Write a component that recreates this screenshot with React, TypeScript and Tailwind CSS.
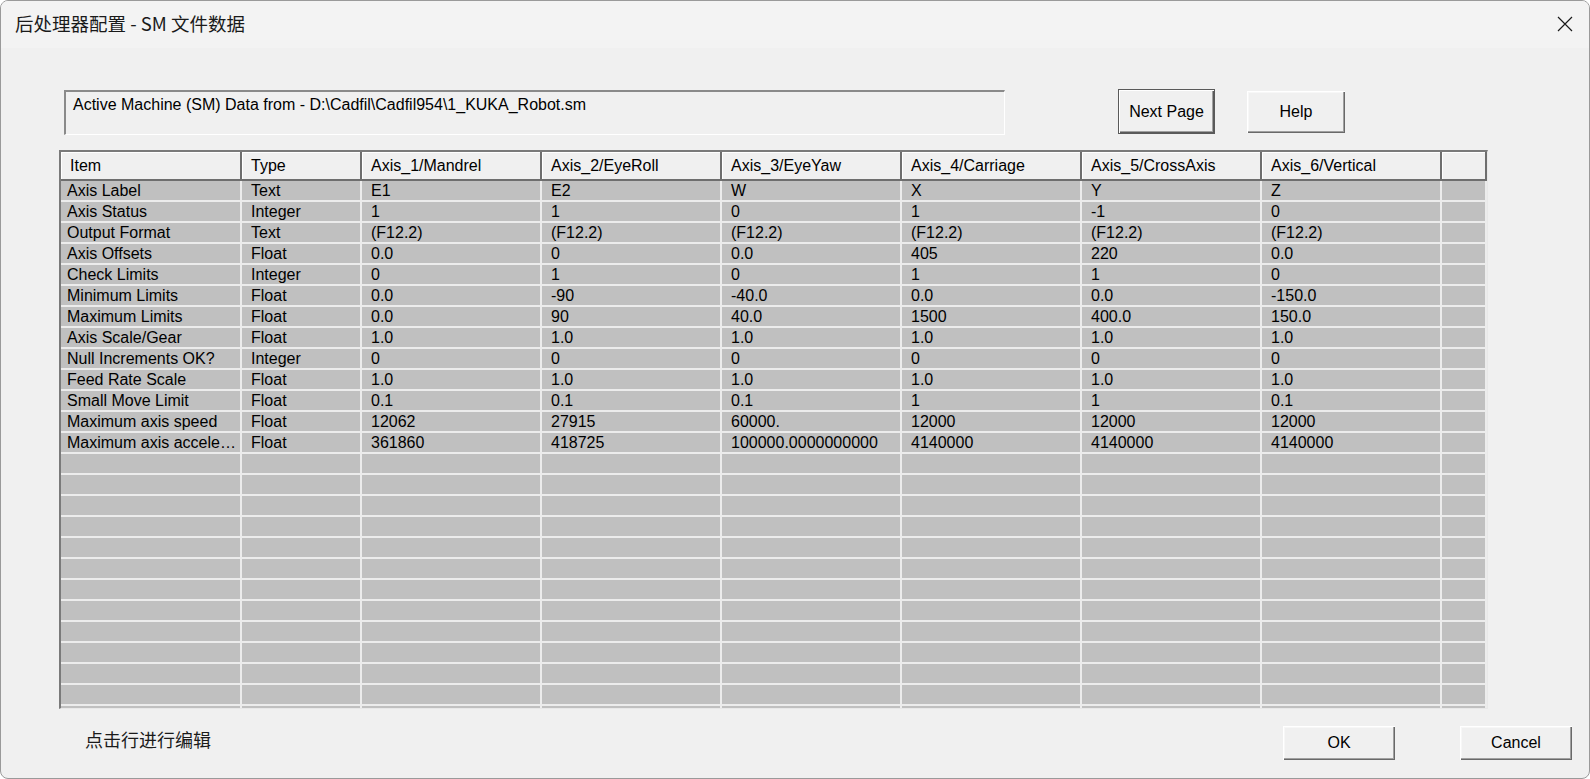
import React from 'react';

const columns = [
  'Item',
  'Type',
  'Axis_1/Mandrel',
  'Axis_2/EyeRoll',
  'Axis_3/EyeYaw',
  'Axis_4/Carriage',
  'Axis_5/CrossAxis',
  'Axis_6/Vertical',
  '',
];

const rows: string[][] = [
  ['Axis Label', 'Text', 'E1', 'E2', 'W', 'X', 'Y', 'Z'],
  ['Axis Status', 'Integer', '1', '1', '0', '1', '-1', '0'],
  ['Output Format', 'Text', '(F12.2)', '(F12.2)', '(F12.2)', '(F12.2)', '(F12.2)', '(F12.2)'],
  ['Axis Offsets', 'Float', '0.0', '0', '0.0', '405', '220', '0.0'],
  ['Check Limits', 'Integer', '0', '1', '0', '1', '1', '0'],
  ['Minimum Limits', 'Float', '0.0', '-90', '-40.0', '0.0', '0.0', '-150.0'],
  ['Maximum Limits', 'Float', '0.0', '90', '40.0', '1500', '400.0', '150.0'],
  ['Axis Scale/Gear', 'Float', '1.0', '1.0', '1.0', '1.0', '1.0', '1.0'],
  ['Null Increments OK?', 'Integer', '0', '0', '0', '0', '0', '0'],
  ['Feed Rate Scale', 'Float', '1.0', '1.0', '1.0', '1.0', '1.0', '1.0'],
  ['Small Move Limit', 'Float', '0.1', '0.1', '0.1', '1', '1', '0.1'],
  ['Maximum axis speed', 'Float', '12062', '27915', '60000.', '12000', '12000', '12000'],
  ['Maximum axis accele…', 'Float', '361860', '418725', '100000.0000000000', '4140000', '4140000', '4140000'],
];

// pad out with empty rows so the grid fills its box
while (rows.length < 26) rows.push(['', '', '', '', '', '', '', '']);

const gridCols = 'grid grid-cols-[181px_120px_180px_180px_180px_180px_180px_180px_1fr]';

function WinButton({ label, isDefault, className }: { label: string; isDefault?: boolean; className: string }) {
  return (
    <button
      className={
        'flex items-center justify-center bg-[#f0f0f0] text-[16px] text-black ' +
        (isDefault
          ? 'border border-[#5a5a5a] shadow-[inset_1px_1px_#ffffff,inset_-1px_-1px_#5a5a5a,inset_-2px_-2px_#a0a0a0] '
          : 'shadow-[inset_1px_1px_#ffffff,inset_-1px_-1px_#696969,inset_-2px_-2px_#a0a0a0,inset_2px_2px_#f7f7f7] ') +
        className
      }
    >
      {label}
    </button>
  );
}

export default function App() {
  return (
    <div className="w-[1590px] h-[779px] bg-white">
      <div
        className="w-full h-full flex flex-col rounded-[8px] border border-[#9a9a9a] overflow-hidden bg-[#f0f0f0] text-black"
        style={{ fontFamily: '"Liberation Sans", Arial, sans-serif' }}
      >
        {/* title bar */}
        <div className="h-[47px] shrink-0 flex items-center justify-between bg-[#f3f3f3] pl-[14px] pr-[16px]">
          <span
            className="text-[18.5px] text-[#1a1a1a] mt-[-2px]"
            style={{ fontFamily: '"Noto Sans CJK SC", "Noto Sans", sans-serif' }}
          >
            后处理器配置 - SM 文件数据
          </span>
          <svg width="16" height="16" viewBox="0 0 16 16" className="mt-[-1px]">
            <path d="M1 1 L15 15 M15 1 L1 15" stroke="#1a1a1a" strokeWidth="1.2" />
          </svg>
        </div>

        {/* body */}
        <div className="flex-1 flex flex-col">
          <div className="flex items-start mt-[42px] ml-[63px]">
            <div className="w-[941px] h-[45px] border-t-2 border-l-2 border-[#8a8a8a] border-r border-b border-r-white border-b-white pl-[7px] pt-[3px] text-[16px] leading-[20px]">
              Active Machine (SM) Data from - D:\Cadfil\Cadfil954\1_KUKA_Robot.sm
            </div>
            <WinButton label="Next Page" isDefault className="ml-[113px] mt-[-1px] w-[97px] h-[45px]" />
            <WinButton label="Help" className="ml-[32px] mt-[1px] w-[98px] h-[42px]" />
          </div>

          {/* grid */}
          <div className="mt-[15px] ml-[58px] w-[1429px] h-[559px] overflow-hidden border-t-2 border-l-2 border-[#7a7a7a] border-r border-b border-r-[#e8e8e8] border-b-[#e8e8e8] bg-[#c0c0c0] text-[16px]">
            <div className={gridCols + ' h-[29px]'}>
              {columns.map((c, i) => (
                <div
                  key={i}
                  className="bg-[#f0f0f0] border-r-2 border-b-2 border-[#6e6e6e] shadow-[inset_1px_1px_#ffffff] flex items-center pl-[9px] whitespace-nowrap overflow-hidden"
                >
                  {c}
                </div>
              ))}
            </div>
            {rows.map((r, ri) => (
              <div key={ri} className={gridCols + ' h-[21px]'}>
                {[...r, ''].map((v, ci) => (
                  <div
                    key={ci}
                    className={
                      'border-r-2 border-b-2 border-[#ececec] flex items-center whitespace-nowrap overflow-hidden leading-[19px] ' +
                      (ci === 0 ? 'pl-[6px]' : 'pl-[9px]')
                    }
                  >
                    {v}
                  </div>
                ))}
              </div>
            ))}
          </div>

          {/* footer */}
          <div className="flex items-center mt-[17px] h-[34px]">
            <span
              className="ml-[84px] mt-[-8px] text-[18px] text-[#1a1a1a]"
              style={{ fontFamily: '"Noto Sans CJK SC", sans-serif' }}
            >
              点击行进行编辑
            </span>
            <WinButton label="OK" className="ml-auto w-[112px] h-[34px]" />
            <WinButton label="Cancel" className="ml-[65px] mr-[17px] w-[112px] h-[34px]" />
          </div>
        </div>
      </div>
    </div>
  );
}
